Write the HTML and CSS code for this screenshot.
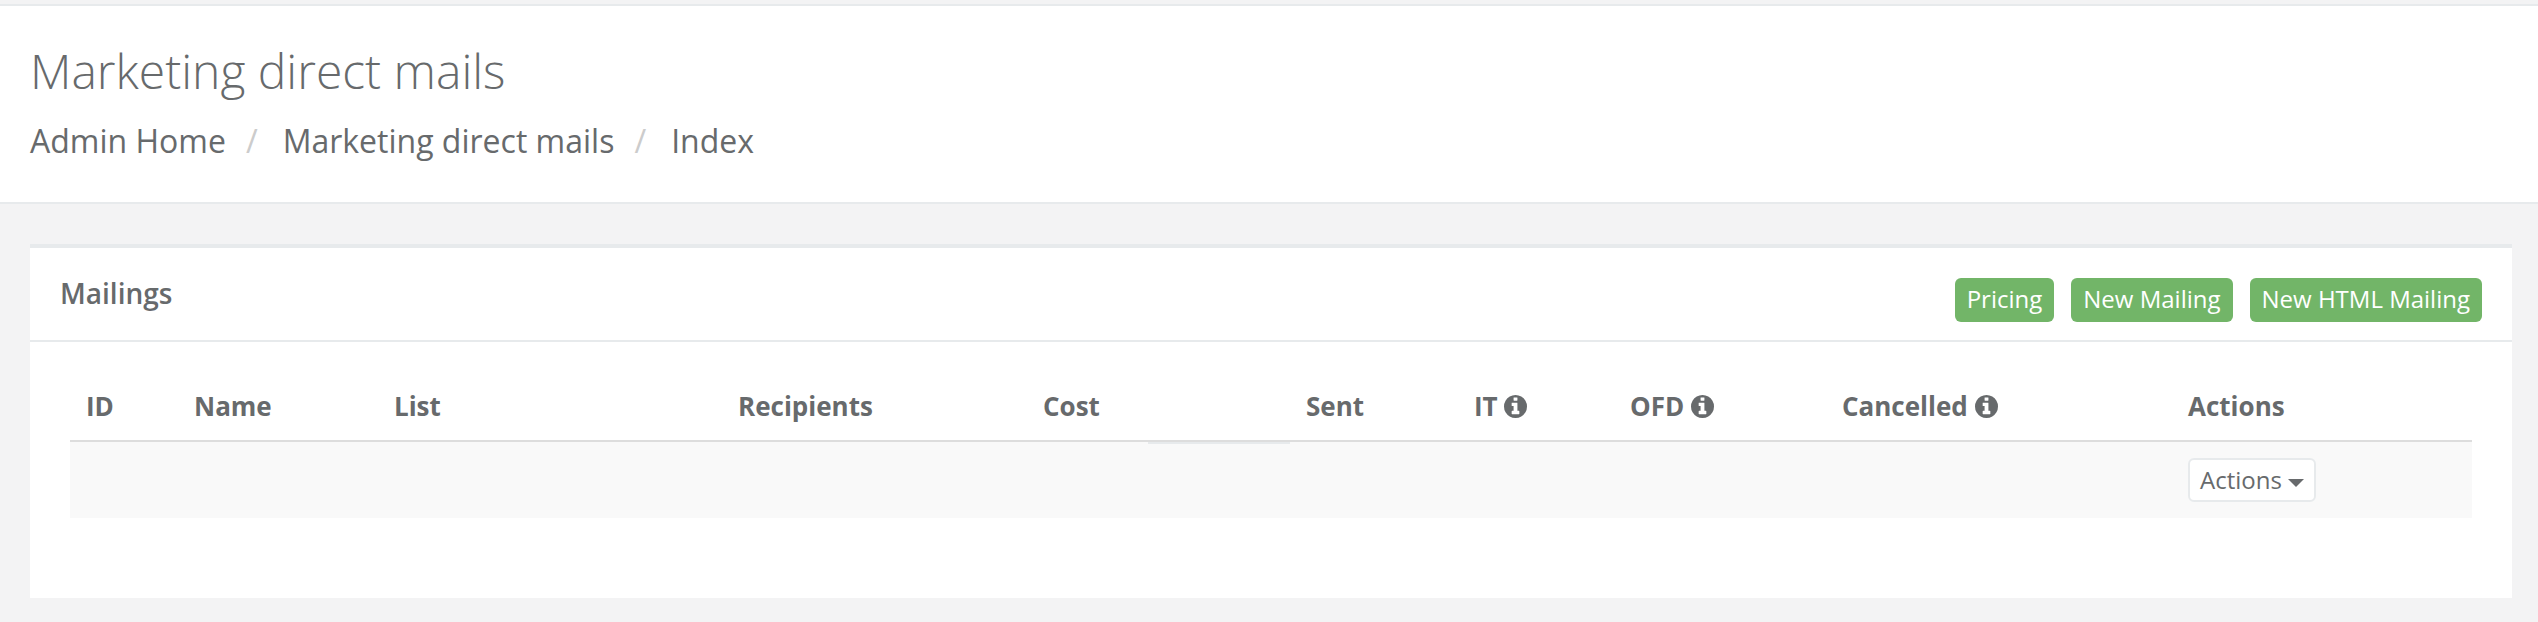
FILE: index.html
```html
<!DOCTYPE html>
<html lang="en">
<head>
    <meta charset="UTF-8">
    <meta name="viewport" content="width=device-width, initial-scale=1.0">
    <title>Marketing direct mails</title>
    <link rel="stylesheet" href="styles.css">
</head>
<body>
    <svg class="icon-defs" aria-hidden="true">
        <symbol id="info" viewBox="0 0 1536 1536">
            <path d="M1024 1248v-160q0-14-9-23t-23-9h-96v-512q0-14-9-23t-23-9h-320q-14 0-23 9t-9 23v160q0 14 9 23t23 9h96v320h-96q-14 0-23 9t-9 23v160q0 14 9 23t23 9h448q14 0 23-9t9-23zm-128-896v-160q0-14-9-23t-23-9h-192q-14 0-23 9t-9 23v160q0 14 9 23t23 9h192q14 0 23-9t9-23zm640 416q0 209-103 385.5t-279.5 279.5-385.5 103-385.5-103-279.5-279.5-103-385.5 103-385.5 279.5-279.5 385.5-103 385.5 103 279.5 279.5 103 385.5z"/>
        </symbol>
    </svg>

    <header class="page-heading">
        <h2>Marketing direct mails</h2>
        <ol class="breadcrumb">
            <li><a href="#">Admin Home</a></li>
            <li><a href="#">Marketing direct mails</a></li>
            <li>Index</li>
        </ol>
    </header>

    <main class="wrapper">
        <section class="panel">
            <div class="panel-title">
                <h5>Mailings</h5>
                <div class="panel-tools">
                    <a class="btn" href="#">Pricing</a>
                    <a class="btn" href="#">New Mailing</a>
                    <a class="btn" href="#">New HTML Mailing</a>
                </div>
            </div>
            <div class="panel-content">
                <table>
                    <colgroup>
                        <col class="col-id"><col class="col-name"><col class="col-list"><col class="col-recipients"><col class="col-cost"><col class="col-blank"><col class="col-sent"><col class="col-it"><col class="col-ofd"><col class="col-cancelled"><col class="col-actions">
                    </colgroup>
                    <thead>
                        <tr>
                            <th>ID</th>
                            <th>Name</th>
                            <th>List</th>
                            <th>Recipients</th>
                            <th>Cost</th>
                            <th class="blank"></th>
                            <th>Sent</th>
                            <th>IT <svg class="info"><use href="#info"/></svg></th>
                            <th>OFD <svg class="info"><use href="#info"/></svg></th>
                            <th>Cancelled <svg class="info"><use href="#info"/></svg></th>
                            <th>Actions</th>
                        </tr>
                    </thead>
                    <tbody>
                        <tr>
                            <td></td><td></td><td></td><td></td><td></td><td></td><td></td><td></td><td></td><td></td>
                            <td><button class="btn-actions">Actions <span class="caret"></span></button></td>
                        </tr>
                    </tbody>
                </table>
            </div>
        </section>
    </main>
</body>
</html>
```

FILE: styles.css
```css
* { box-sizing: border-box; }
html, body { height: 100%; }
body { margin: 0; background: #f3f3f4; color: #676a6c; font-family: "Open Sans", sans-serif; overflow: hidden; }
.icon-defs { display: none; }

.page-heading { background: white; margin-top: 4px; height: 200px; border-top: 2px solid #e7eaec; border-bottom: 2px solid #e7eaec; padding: 0 30px; }
.page-heading h2 { margin: 0; padding-top: 33px; font-size: 48px; line-height: 64px; font-weight: 300; }
.breadcrumb { display: flex; list-style: none; margin: 16px 0 0; padding: 0; font-size: 32px; line-height: 44px; }
.breadcrumb a { color: inherit; text-decoration: none; }
.breadcrumb li + li::before { content: "/"; color: #ccc; padding: 0 25px 0 20px; }

.wrapper { padding: 40px 26px 0 30px; }
.panel { background: white; border-top: 4px solid #e7eaec; height: 354px; }
.panel-title { display: flex; justify-content: space-between; height: 94px; padding: 30px 30px 0 30px; border-bottom: 2px solid #e7eaec; }
.panel-title h5 { margin: 0; font-size: 28px; line-height: 30px; font-weight: 600; }
.panel-tools { display: flex; gap: 17px; }
.btn { display: block; height: 44px; padding: 0 12px; background: #72b568; border-radius: 6px; color: white; font-size: 24px; line-height: 42px; text-decoration: none; }

.panel-content { padding: 0 40px 0 40px; }
table { width: 100%; table-layout: fixed; border-collapse: collapse; }
th { height: 99px; padding: 30px 16px 0; border-bottom: 2px solid #ddd; text-align: left; font-size: 26px; font-weight: 700; white-space: nowrap; }
th:last-child { padding-left: 17px; }
th.blank { position: relative; z-index: 1; }
th.blank::after { content: ""; position: absolute; left: 0; right: 0; bottom: -4px; height: 2px; background: #e7eaec; }
td { height: 77px; padding: 0 17px; background: #f9f9f9; }
.info { width: 23px; height: 23px; fill: currentColor; vertical-align: -2px; }

.col-id { width: 108px; }
.col-name { width: 200px; }
.col-list { width: 344px; }
.col-recipients { width: 305px; }
.col-cost { width: 121px; }
.col-blank { width: 142px; }
.col-sent { width: 168px; }
.col-it { width: 156px; }
.col-ofd { width: 212px; }
.col-cancelled { width: 345px; }

.btn-actions { display: block; height: 44px; padding: 0 10px; background: white; border: 2px solid #e7eaec; border-radius: 6px; color: inherit; font: 24px/38px "Open Sans", sans-serif; white-space: nowrap; }
.caret { display: inline-block; margin-left: 0; border-top: 8px solid; border-left: 8px solid transparent; border-right: 8px solid transparent; vertical-align: middle; }
```
